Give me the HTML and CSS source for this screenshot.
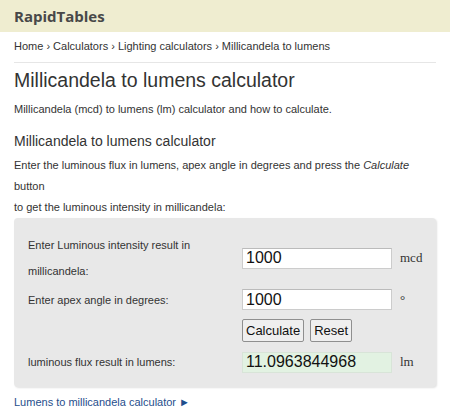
FILE: index.html
```html
<!DOCTYPE html>
<html>
<head>
<meta charset="utf-8">
<link rel="stylesheet" href="styles.css">
</head>
<body>
<div class="header"><span class="logo">RapidTables</span></div>
<div class="main">
  <div class="crumbs">Home › Calculators › Lighting calculators › Millicandela to lumens</div>
  <hr class="rule">
  <h1 class="title">Millicandela to lumens calculator</h1>
  <p class="intro">Millicandela (mcd) to lumens (lm) calculator and how to calculate.</p>
  <h2 class="subtitle">Millicandela to lumens calculator</h2>
  <p class="desc">Enter the luminous flux in lumens, apex angle in degrees and press the <i>Calculate</i><br>button<br>to get the luminous intensity in millicandela:</p>
  <div class="calc">
    <div class="lbl">Enter Luminous intensity result in millicandela:</div>
    <input class="field" type="text" value="1000">
    <div class="unit">mcd</div>
    <div class="lbl">Enter apex angle in degrees:</div>
    <input class="field" type="text" value="1000">
    <div class="unit">°</div>
    <div></div>
    <div class="btns"><button class="btn">Calculate</button><button class="btn">Reset</button></div>
    <div></div>
    <div class="lbl">luminous flux result in lumens:</div>
    <input class="field out" type="text" value="11.0963844968">
    <div class="unit">lm</div>
  </div>
  <a class="next" href="#">Lumens to millicandela calculator ►</a>
</div>
</body>
</html>
```
FILE: styles.css
```css
html, body { margin: 0; padding: 0; background: #fff; }
body { font-family: "Liberation Sans", Arial, sans-serif; color: #333; font-size: 11px; }
.header { height: 32px; background: #efedd0; display: flex; align-items: center; padding-left: 14px; }
.logo { font-family: "Open Sans", "Liberation Sans", sans-serif; font-weight: bold; font-size: 15px; color: #484848; }
.main { padding: 0 14px; }
.crumbs { margin-top: 6px; line-height: 16px; font-size: 11px; color: #333; }
.rule { border: 0; border-top: 1px solid #e6e6e6; margin: 8px 0 0; }
.title { font-weight: normal; font-size: 19.5px; margin: 5px 0 0; line-height: 24px; color: #333; }
.intro { margin: 9px 0 0; line-height: 16px; }
.subtitle { font-weight: normal; font-size: 14px; margin: 15px 0 0; line-height: 18px; color: #333; }
.desc { margin: 5px 0 0; line-height: 21px; }
.calc { margin-top: 0; background: #e8e8e8; border-radius: 4px; box-shadow: 1px 1px 2px rgba(0,0,0,0.12);
  display: grid; grid-template-columns: 214px 150px auto; grid-template-rows: 52px 31px 33px 28px;
  align-items: center; padding: 14px 14px 11px 14px; }
.lbl { line-height: 26px; font-size: 11px; padding-right: 20px; }
.field { width: 150px; height: 21px; box-sizing: border-box; border: 1px solid #ccc; border-top-color: #bbb; background: #fff;
  font-family: "Liberation Sans", Arial, sans-serif; font-size: 16px; padding: 0 3px; color: #111; margin: 0; }
.field.out { background: #e2f2e2; border-color: #d8e4d8; }
.unit { font-family: "Liberation Serif", "Times New Roman", serif; font-size: 13px; padding-left: 8px; color: #333; }
.btns { display: flex; gap: 6px; margin-top: -2px; }
.btn { height: 23px; font-family: "Liberation Sans", Arial, sans-serif; font-size: 13px; padding: 0 3px; background: #efefef;
  border: 1px solid #8f8f8f; border-radius: 2px; color: #111; margin: 0; }
.next { display: block; margin-top: 7px; color: #1f4e8c; text-decoration: none; line-height: 16px; }
```
